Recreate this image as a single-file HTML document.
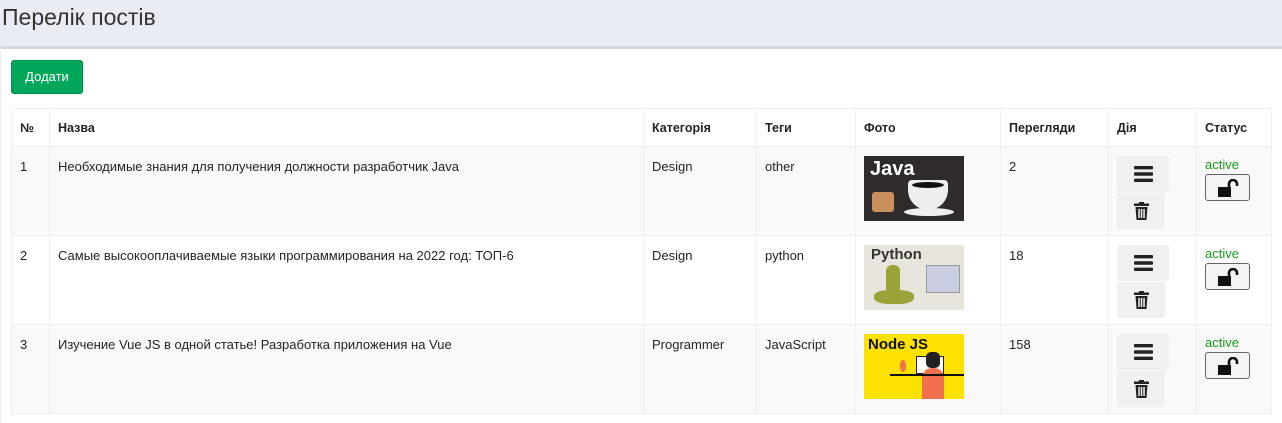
<!DOCTYPE html>
<html><head><meta charset="utf-8">
<style>
*{box-sizing:border-box;margin:0;padding:0}
body{width:1282px;height:423px;overflow:hidden;background:#e9ecf2;font-family:"Liberation Sans",sans-serif;color:#212529;font-size:13px;position:relative}
h1{position:absolute;left:2px;top:4px;font-weight:400;font-size:23px;color:#333}
.card{position:absolute;left:1px;top:46px;width:1281px;height:377px;background:#fff;border-top:3px solid #d3d6de}
.btn{position:absolute;left:10px;top:11px;width:72px;height:34px;background:#00a65a;border:1px solid #008d4c;border-radius:3px;color:#fff;font-size:13px;line-height:32px;text-align:center}
table{position:absolute;left:10px;top:59px;border-collapse:collapse;width:1261px}
td,th{border:1px solid #f0f0f0;vertical-align:top;text-align:left;padding:0 8px}
th{height:38px;font-weight:700;vertical-align:middle;font-size:12.5px}
td{height:89px;padding-top:12px}
tr.s td{background:#f9f9f9}
.img{width:100px;height:65px;position:relative;overflow:hidden;margin-top:-3px}
.abtn{width:52px;height:36px;background:#f0f0f0;border-radius:3px;display:flex;align-items:center;justify-content:center;margin-top:-3px}
.abtn2{width:48px;height:36px;background:#f0f0f0;border-radius:0 0 3px 3px;display:flex;align-items:center;justify-content:center;margin-top:1px}
.act{color:#1a9a1a;margin-top:-2px}
.lock{width:45px;height:27px;border:1px solid #666;border-radius:3px;background:#f4f4f4;display:flex;align-items:center;justify-content:center;margin-top:2px}
</style></head><body>
<h1>Перелік постів</h1>
<div class="card">
<div class="btn">Додати</div>
<table>
<tr><th style="width:38px">№</th><th style="width:594px">Назва</th><th style="width:113px">Категорія</th><th style="width:99px">Теги</th><th style="width:145px">Фото</th><th style="width:108px">Перегляди</th><th style="width:88px">Дія</th><th>Статус</th></tr>
<tr class="s"><td>1</td><td>Необходимые знания для получения должности разработчик Java</td><td>Design</td><td>other</td>
<td><div class="img" style="background:#2f2b2b"><div style="position:absolute;left:6px;top:2px;color:#fff;font-weight:700;font-size:20px">Java</div><div style="position:absolute;left:8px;top:36px;width:22px;height:20px;background:#c8905d;border-radius:3px"></div><div style="position:absolute;left:44px;top:24px;width:40px;height:30px;background:#eee;border-radius:4px 4px 20px 20px"></div><div style="position:absolute;left:48px;top:26px;width:32px;height:6px;background:#111;border-radius:50%"></div><div style="position:absolute;left:40px;top:52px;width:50px;height:8px;background:#eee;border-radius:50%"></div></div></td>
<td>2</td><td><div class="abtn"><svg width="19" height="16"><rect y="0" width="19" height="3.4" rx="1" fill="#222"/><rect y="6.3" width="19" height="3.4" rx="1" fill="#222"/><rect y="12.6" width="19" height="3.4" rx="1" fill="#222"/></svg></div><div class="abtn2"><svg width="15" height="18"><rect x="0" y="1.5" width="15" height="2.5" fill="#222"/><rect x="5" y="0" width="5" height="2" fill="#222"/><path d="M1.5 5h12l-1 13h-10z" fill="#222"/><rect x="4.3" y="7" width="1.5" height="9" fill="#f0f0f0"/><rect x="6.8" y="7" width="1.5" height="9" fill="#f0f0f0"/><rect x="9.3" y="7" width="1.5" height="9" fill="#f0f0f0"/></svg></div></td>
<td><div class="act">active</div><div class="lock"><svg width="22" height="18"><path d="M1 8h13v10H1z" fill="#111"/><path d="M12 9V5a4 4 0 0 1 8 0v2" stroke="#111" stroke-width="2.6" fill="none"/></svg></div></td></tr>
<tr><td>2</td><td>Самые высокооплачиваемые языки программирования на 2022 год: ТОП-6</td><td>Design</td><td>python</td>
<td><div class="img" style="background:#e8e6dc"><div style="position:absolute;left:7px;top:1px;color:#333;font-weight:700;font-size:15px">Python</div><div style="position:absolute;left:10px;top:45px;width:40px;height:14px;background:#9aa33a;border-radius:40%"></div><div style="position:absolute;left:22px;top:20px;width:14px;height:30px;background:#9aa33a;border-radius:6px"></div><div style="position:absolute;left:62px;top:20px;width:34px;height:28px;background:#c9cfe0;border:1px solid #999"></div></div></td>
<td>18</td><td><div class="abtn"><svg width="19" height="16"><rect y="0" width="19" height="3.4" rx="1" fill="#222"/><rect y="6.3" width="19" height="3.4" rx="1" fill="#222"/><rect y="12.6" width="19" height="3.4" rx="1" fill="#222"/></svg></div><div class="abtn2"><svg width="15" height="18"><rect x="0" y="1.5" width="15" height="2.5" fill="#222"/><rect x="5" y="0" width="5" height="2" fill="#222"/><path d="M1.5 5h12l-1 13h-10z" fill="#222"/><rect x="4.3" y="7" width="1.5" height="9" fill="#f0f0f0"/><rect x="6.8" y="7" width="1.5" height="9" fill="#f0f0f0"/><rect x="9.3" y="7" width="1.5" height="9" fill="#f0f0f0"/></svg></div></td>
<td><div class="act">active</div><div class="lock"><svg width="22" height="18"><path d="M1 8h13v10H1z" fill="#111"/><path d="M12 9V5a4 4 0 0 1 8 0v2" stroke="#111" stroke-width="2.6" fill="none"/></svg></div></td></tr>
<tr class="s"><td>3</td><td>Изучение Vue JS в одной статье! Разработка приложения на Vue</td><td>Programmer</td><td>JavaScript</td>
<td><div class="img" style="background:#ffe100"><div style="position:absolute;left:4px;top:2px;color:#111;font-weight:700;font-size:15px">Node JS</div><div style="position:absolute;left:52px;top:22px;width:28px;height:18px;background:#fff;border:1px solid #222"></div><div style="position:absolute;left:62px;top:18px;width:14px;height:16px;background:#222;border-radius:5px"></div><div style="position:absolute;left:58px;top:34px;width:22px;height:31px;background:#f07050;border-radius:10px 10px 0 0"></div><div style="position:absolute;left:26px;top:40px;width:74px;height:2px;background:#111"></div><div style="position:absolute;left:36px;top:26px;width:6px;height:12px;background:#f07050;border-radius:50%"></div></div></td>
<td>158</td><td><div class="abtn"><svg width="19" height="16"><rect y="0" width="19" height="3.4" rx="1" fill="#222"/><rect y="6.3" width="19" height="3.4" rx="1" fill="#222"/><rect y="12.6" width="19" height="3.4" rx="1" fill="#222"/></svg></div><div class="abtn2"><svg width="15" height="18"><rect x="0" y="1.5" width="15" height="2.5" fill="#222"/><rect x="5" y="0" width="5" height="2" fill="#222"/><path d="M1.5 5h12l-1 13h-10z" fill="#222"/><rect x="4.3" y="7" width="1.5" height="9" fill="#f0f0f0"/><rect x="6.8" y="7" width="1.5" height="9" fill="#f0f0f0"/><rect x="9.3" y="7" width="1.5" height="9" fill="#f0f0f0"/></svg></div></td>
<td><div class="act">active</div><div class="lock"><svg width="22" height="18"><path d="M1 8h13v10H1z" fill="#111"/><path d="M12 9V5a4 4 0 0 1 8 0v2" stroke="#111" stroke-width="2.6" fill="none"/></svg></div></td></tr>
</table>
</div>
</body></html>
